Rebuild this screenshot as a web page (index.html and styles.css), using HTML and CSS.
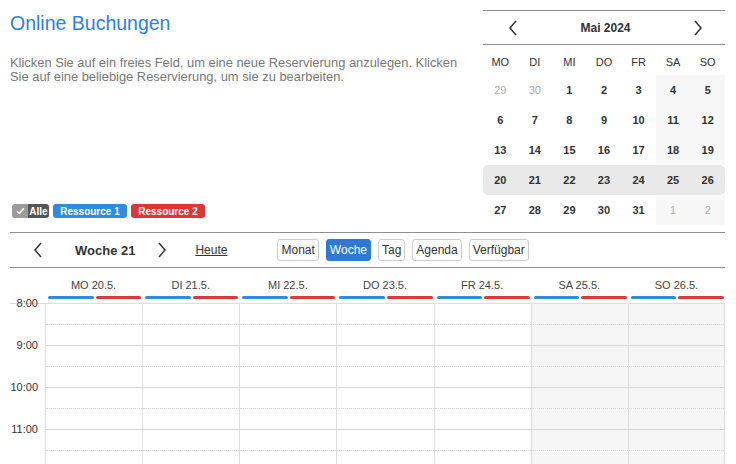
FILE: index.html
```html
<!DOCTYPE html>
<html lang="de">
<head>
  <meta charset="UTF-8" />
  <meta name="viewport" content="width=device-width, initial-scale=1.0"/>
  <title>Online Buchungen</title>
  <link rel="stylesheet" href="styles.css">
</head>
<body>
  <div class="top">
    <div class="intro">
      <h1>Online Buchungen</h1>
      <p class="hint">Klicken Sie auf ein freies Feld, um eine neue Reservierung anzulegen. Klicken Sie auf eine beliebige Reservierung, um sie zu bearbeiten.</p>
      <div class="filters">
        <span class="badge badge-all">
          <span class="check"><svg width="9" height="8" viewBox="0 0 9 8"><polyline points="1,4.2 3.4,6.5 8,1.2" fill="none" stroke="#fff" stroke-width="1.4"/></svg></span>
          <span class="all-label">Alle</span>
        </span>
        <span class="badge badge-res1">Ressource 1</span>
        <span class="badge badge-res2">Ressource 2</span>
      </div>
    </div>

    <div class="mini-cal">
      <div class="mc-head">
        <svg class="chev" width="10" height="16" viewBox="0 0 10 16"><polyline points="8,1 2,8 8,15" fill="none" stroke="#333" stroke-width="1.5"/></svg>
        <span class="mc-title">Mai 2024</span>
        <svg class="chev" width="10" height="16" viewBox="0 0 10 16"><polyline points="2,1 8,8 2,15" fill="none" stroke="#333" stroke-width="1.5"/></svg>
      </div>
      <div class="mc-weekdays">
        <span>MO</span><span>DI</span><span>MI</span><span>DO</span><span>FR</span><span>SA</span><span>SO</span>
      </div>
      <div class="mc-row"><span class="out">29</span><span class="out">30</span><span>1</span><span>2</span><span>3</span><span class="we">4</span><span class="we">5</span></div>
      <div class="mc-row"><span>6</span><span>7</span><span>8</span><span>9</span><span>10</span><span class="we">11</span><span class="we">12</span></div>
      <div class="mc-row"><span>13</span><span>14</span><span>15</span><span>16</span><span>17</span><span class="we">18</span><span class="we">19</span></div>
      <div class="mc-row current"><span>20</span><span>21</span><span>22</span><span>23</span><span>24</span><span>25</span><span>26</span></div>
      <div class="mc-row"><span>27</span><span>28</span><span>29</span><span>30</span><span>31</span><span class="we out">1</span><span class="we out">2</span></div>
    </div>
  </div>

  <div class="toolbar">
    <svg class="nav-prev" width="10" height="16" viewBox="0 0 10 16"><polyline points="8,1 2,8 8,15" fill="none" stroke="#333" stroke-width="1.5"/></svg>
    <span class="week-label">Woche 21</span>
    <svg class="nav-next" width="10" height="16" viewBox="0 0 10 16"><polyline points="2,1 8,8 2,15" fill="none" stroke="#333" stroke-width="1.5"/></svg>
    <a class="today" href="#">Heute</a>
    <div class="views">
      <button>Monat</button>
      <button class="active">Woche</button>
      <button>Tag</button>
      <button>Agenda</button>
      <button>Verfügbar</button>
    </div>
  </div>

  <div class="week">
    <div class="week-head" id="weekHead">
      <div class="gutter"></div>
    </div>
    <div class="week-body" id="weekBody">
      <div class="times" id="times"></div>
    </div>
  </div>

  <script>
    const days = ['MO 20.5.', 'DI 21.5.', 'MI 22.5.', 'DO 23.5.', 'FR 24.5.', 'SA 25.5.', 'SO 26.5.'];
    const firstHour = 8, hoursShown = 4;

    function buildWeek() {
      const head = document.getElementById('weekHead');
      const body = document.getElementById('weekBody');
      const times = document.getElementById('times');

      for (let h = firstHour; h < firstHour + hoursShown; h++) {
        const t = document.createElement('div');
        t.className = 'time';
        t.innerText = h + ':00';
        times.appendChild(t);
      }

      days.forEach((d, i) => {
        const dh = document.createElement('div');
        dh.className = 'day-head';
        dh.innerHTML = `<div class="day-name">${d}</div>
          <div class="bars"><span class="bar bar-1"></span><span class="bar bar-2"></span></div>`;
        head.appendChild(dh);

        const col = document.createElement('div');
        col.className = 'day-col' + (i >= 5 ? ' weekend' : '');
        for (let s = 0; s < hoursShown * 2; s++) {
          const slot = document.createElement('div');
          slot.className = 'slot' + (s % 2 === 0 ? ' half' : '');
          col.appendChild(slot);
        }
        body.appendChild(col);
      });
    }

    buildWeek();
  </script>
</body>
</html>
```

FILE: styles.css
```css
body {
  font-family: 'Liberation Sans', Arial, sans-serif;
  margin: 0;
  padding: 10px 11px 0 10px;
  color: #333;
  background: #fff;
  overflow: hidden;
}
.top {
  display: flex;
}
.intro {
  flex: 1;
  display: flex;
  flex-direction: column;
  padding-right: 15px;
}
h1 {
  margin: 0;
  font-size: 19.5px;
  line-height: 26px;
  font-weight: normal;
  color: #2f7ee0;
}
.hint {
  margin: 20px 0 0;
  font-size: 12.9px;
  line-height: 14px;
  color: #777;
}
.filters {
  margin-top: auto;
  margin-bottom: 7px;
  display: flex;
  gap: 4px;
  padding-left: 2px;
}
.badge {
  display: inline-flex;
  align-items: center;
  justify-content: center;
  height: 14px;
  border-radius: 3px;
  font-size: 10px;
  font-weight: bold;
  color: #fff;
  overflow: hidden;
}
.badge-all {
  width: 37px;
  justify-content: flex-start;
}
.badge-all .check {
  display: flex;
  align-items: center;
  justify-content: center;
  width: 16px;
  height: 14px;
  background: #9b9b9b;
}
.badge-all .all-label {
  display: flex;
  align-items: center;
  justify-content: center;
  flex: 1;
  height: 14px;
  background: #555;
}
.badge-res1 {
  width: 74px;
  background: #2b8ce2;
}
.badge-res2 {
  width: 74px;
  background: #e03535;
}
.mini-cal {
  width: 242px;
}
.mc-head {
  display: flex;
  align-items: center;
  justify-content: space-between;
  height: 33px;
  border-top: 1px solid #8f8f8f;
  border-bottom: 1px solid #8f8f8f;
  padding: 0 22px 0 25px;
}
.mc-title {
  font-size: 12px;
  font-weight: bold;
  color: #333;
}
.mc-weekdays {
  display: grid;
  grid-template-columns: repeat(7, 1fr);
  height: 26px;
  padding-top: 4px;
  font-size: 11px;
  color: #333;
}
.mc-weekdays span,
.mc-row span {
  display: flex;
  align-items: center;
  justify-content: center;
}
.mc-row {
  display: grid;
  grid-template-columns: repeat(7, 1fr);
  height: 30px;
  font-size: 11px;
  font-weight: bold;
  color: #333;
}
.mc-row .we {
  background: #f7f7f7;
}
.mc-row .out {
  color: #aaa;
  font-weight: normal;
}
.mc-row.current {
  background: #e9e9e9;
  border-radius: 5px;
}
.toolbar {
  display: flex;
  align-items: center;
  height: 34px;
  margin-top: 7px;
  border-top: 1px solid #8f8f8f;
  border-bottom: 1px solid #8f8f8f;
}
.nav-prev {
  margin-left: 23px;
}
.week-label {
  margin-left: 32px;
  font-size: 13px;
  font-weight: bold;
  color: #333;
}
.nav-next {
  margin-left: 22px;
}
.today {
  margin-left: 28px;
  font-size: 12px;
  color: #333;
  text-decoration: underline;
}
.views {
  display: flex;
  gap: 7px;
  margin-left: 50px;
}
.views button {
  font-family: 'Liberation Sans', Arial, sans-serif;
  font-size: 12px;
  height: 22px;
  padding: 0 3px;
  border: 1px solid #ccc;
  border-radius: 3px;
  background: #fff;
  color: #333;
}
.views button.active {
  background: #2f78d8;
  border-color: #2f78d8;
  color: #fff;
}
.week-head {
  display: grid;
  grid-template-columns: 35px repeat(7, 1fr);
  height: 35px;
}
.day-head {
  padding-top: 10px;
}
.day-name {
  text-align: center;
  font-size: 11px;
  line-height: 14px;
  color: #444;
}
.bars {
  display: flex;
  gap: 2px;
  margin-top: 4px;
  padding: 0 1px 0 3px;
}
.bar {
  flex: 1;
  height: 3px;
  border-radius: 2px;
}
.bar-1 {
  background: #2b8ce2;
}
.bar-2 {
  background: #dc3a3a;
}
.week-body {
  display: grid;
  grid-template-columns: 35px repeat(7, 1fr);
  border-top: 1px solid #ddd;
}
.times {
  margin-top: -8px;
}
.time {
  height: 42px;
  line-height: 14px;
  padding-right: 7px;
  text-align: right;
  font-size: 11px;
  color: #333;
}
.day-col {
  border-left: 1px solid #ddd;
}
.day-col:last-child {
  border-right: 1px solid #ddd;
}
.day-col.weekend {
  background: #f5f5f5;
}
.slot {
  box-sizing: border-box;
  height: 21px;
  border-bottom: 1px solid #d6d6d6;
}
.slot.half {
  border-bottom: 1px dotted #d6d6d6;
}
```
